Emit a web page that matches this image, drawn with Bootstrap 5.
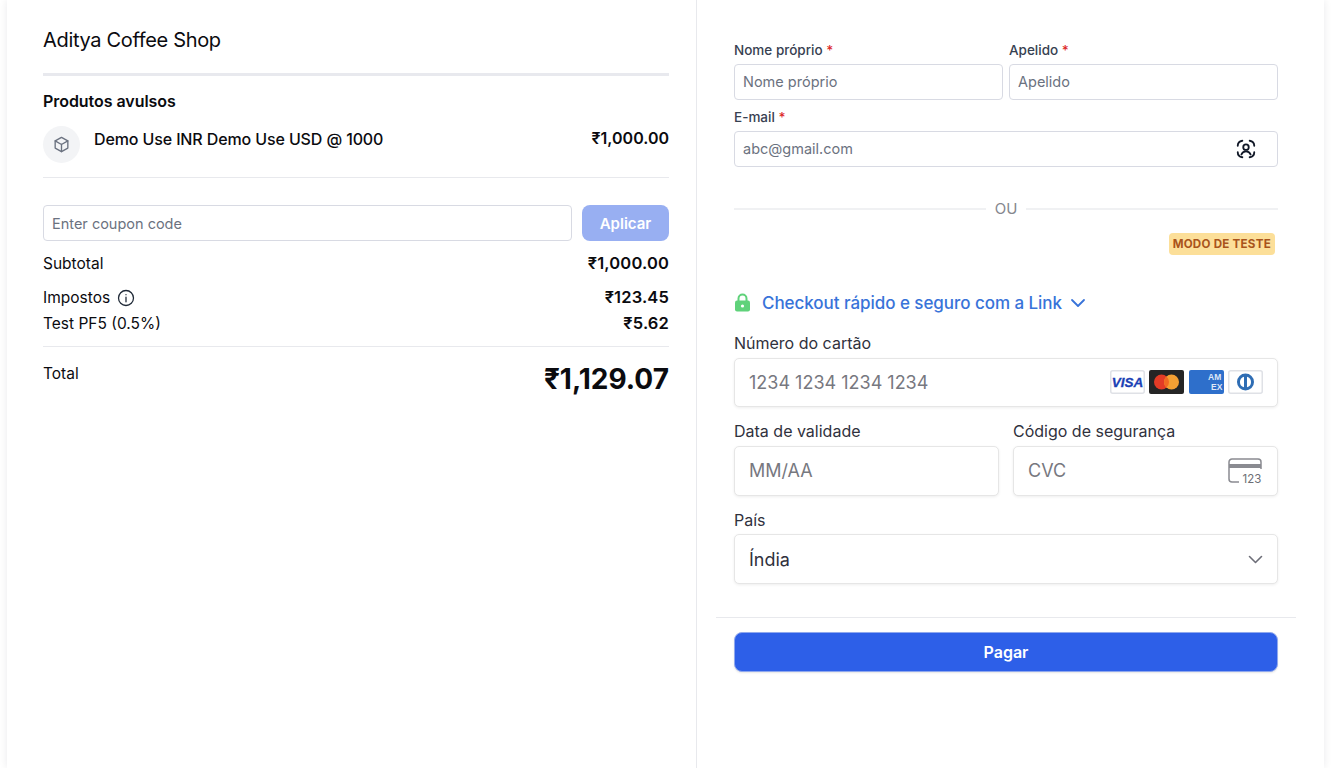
<!DOCTYPE html>
<html lang="pt">
<head>
  <meta charset="utf-8">
  <title>Checkout</title>
  <link rel="stylesheet" href="https://cdn.jsdelivr.net/npm/bootstrap@5.3.0/dist/css/bootstrap.min.css">
  <style>
    html, body { height: 100%; }
    body { font-family: Inter, "Liberation Sans", sans-serif; background: #fff; color: #0b0b0f; overflow: hidden; }
    .shell { width: 1317px; height: 768px; margin-left: 7px; box-shadow: 0 0 8px rgba(17, 24, 39, .09); clip-path: inset(0 -12px 0 -12px); }
    .pane-left { width: 690px; padding: 28px 27px 0 36px; border-right: 1px solid #e8e9ed; }
    .pane-right { width: 627px; padding: 0 28px 0 19px; }
    .half { flex: 1 1 0; min-width: 0; }
    .shop-name { font-size: 20px; line-height: 24px; font-weight: 400; letter-spacing: -.33px; margin: 0; }
    .rule-thick { height: 3px; background: #e8e9ee; margin: 21px 0 15px; }
    .rule { height: 1px; background: #e8e9ed; }
    .group-title { font-size: 16px; line-height: 20px; font-weight: 600; letter-spacing: -.05px; margin: 0 0 15px; }
    .prod-icon { width: 37px; height: 37px; border-radius: 50%; background: #f3f4f6; flex: none; }
    .prod-name { font-size: 16px; line-height: 20px; font-weight: 500; letter-spacing: -.12px; margin: 3px 0 0 14px; }
    .prod-price { font-size: 16px; line-height: 20px; font-weight: 600; margin-top: 2px; }
    .field { height: 36px; border: 1px solid #d8dae3; border-radius: 4px; font-size: 14.5px; color: #374151; padding: 0 8px 2px; box-shadow: none; }
    .field::placeholder { color: #6b7280; opacity: 1; }
    .field-coupon { padding-bottom: 0; }
    .btn-apply { width: 87px; height: 36px; flex: none; font-size: 15px; font-weight: 600; color: #fff; background: #98aff2; border: 0; border-radius: 8px; padding: 2px 0 0; }
    .sum-line { font-size: 15.5px; line-height: 20px; }
    .sum-line > span { line-height: 22px; }
    .sum-line b { font-size: 16.5px; font-weight: 600; letter-spacing: .15px; }
    .total-price { font-size: 28px; line-height: 32px; font-weight: 700; }
    .form-label-sm { font-size: 13.5px; line-height: 16px; font-weight: 500; color: #374151; margin-bottom: 6px; display: block; }
    .req { color: #dc2626; }
    .pad-form { padding: 0 18px; }
    .or-text { font-size: 15px; color: #85878e; line-height: 20px; }
    .or-line { height: 2px; background: #f0f1f3; }
    .test-badge { font-size: 11.6px; line-height: 22px; height: 22px; font-weight: 700; letter-spacing: .25px; color: #a9541b; background: #fcdf99; border-radius: 4px; padding: 0 4px; }
    .link-row { font-size: 17px; line-height: 20px; font-weight: 500; letter-spacing: -.05px; color: #3873d9; }
    .stripe-label { font-size: 16px; line-height: 20px; color: #30313d; margin-bottom: 4.7px; display: block; }
    .stripe-box { height: 49.6px; border: 1px solid #e6e6e6; border-radius: 5px; box-shadow: 0 1px 3px rgba(0, 0, 0, .07); padding: 0 14px; font-size: 18px; color: #77787f; background: #fff; }
    .card-logos { gap: 4.33px; margin-bottom: 1px; }
    .card-logo { width: 35px; height: 24px; display: block; }
    .btn-pay { height: 40px; font-size: 16px; font-weight: 600; color: #fff; background: #2d5fe8; border: 1px solid #8fa8ee; border-radius: 8px; padding: 0; box-shadow: 0 1px 2px rgba(0, 0, 0, .1); }
    .btn-pay:hover { background: #2d5fe8; color: #fff; }
    .pay-rule { height: 1px; background: #e8e9ed; }
  </style>
</head>
<body>
  <div class="shell d-flex">
    <!-- resumo do pedido -->
    <section class="pane-left">
      <h1 class="shop-name">Aditya Coffee Shop</h1>
      <div class="rule-thick"></div>
      <h2 class="group-title">Produtos avulsos</h2>
      <div class="d-flex align-items-start">
        <div class="prod-icon d-flex align-items-center justify-content-center">
          <svg width="19" height="19" viewBox="0 0 24 24" fill="none" stroke="#6b7280" stroke-width="1.7" stroke-linejoin="round" stroke-linecap="round"><path d="M12 3l8 4.500v9L12 21l-8-4.500v-9z"/><path d="M4 7.500l8 4.500 8-4.500M12 12v9"/></svg>
        </div>
        <div class="prod-name">Demo Use INR Demo Use USD @ 1000</div>
        <div class="prod-price ms-auto">₹1,000.00</div>
      </div>
      <div class="rule" style="margin-top:14px"></div>

      <div class="d-flex" style="gap:10px;margin-top:27px">
        <input type="text" class="form-control field field-coupon" placeholder="Enter coupon code">
        <button type="button" class="btn btn-apply">Aplicar</button>
      </div>

      <div class="sum-line d-flex justify-content-between mt-2 pt-1"><span>Subtotal</span><b>₹1,000.00</b></div>
      <div class="sum-line d-flex justify-content-between" style="margin-top:12px">
        <span class="d-flex align-items-center" style="gap:7px">Impostos
          <svg width="18" height="18" viewBox="0 0 24 24" fill="none" stroke="#1f2937" stroke-width="1.700" stroke-linecap="round"><circle cx="12" cy="12" r="10"/><path d="M12 11v6M12 7.400v.1"/></svg>
        </span>
        <b>₹123.45</b>
      </div>
      <div class="sum-line d-flex justify-content-between" style="margin-top:4px"><span>Test PF5 (0.5%)</span><b>₹5.62</b></div>
      <div class="rule" style="margin-top:11px"></div>
      <div class="d-flex justify-content-between align-items-start" style="margin-top:16px">
        <span class="sum-line"><span>Total</span></span>
        <span class="total-price">₹1,129.07</span>
      </div>
    </section>

    <!-- pagamento -->
    <section class="pane-right">
      <div class="pad-form" style="padding-top:42px">
        <div class="d-flex" style="gap:6px">
          <div class="half">
            <label class="form-label-sm">Nome próprio <span class="req">*</span></label>
            <input type="text" class="form-control field" placeholder="Nome próprio">
          </div>
          <div class="half">
            <label class="form-label-sm">Apelido <span class="req">*</span></label>
            <input type="text" class="form-control field" placeholder="Apelido">
          </div>
        </div>
        <label class="form-label-sm" style="margin-top:9px">E-mail <span class="req">*</span></label>
        <div class="position-relative">
          <input type="text" class="form-control field" placeholder="abc@gmail.com">
          <svg class="position-absolute" style="right:21px;top:7px" width="22" height="22" viewBox="0 0 24 24" fill="none" stroke="#111827" stroke-width="2" stroke-linecap="round"><path d="M3 8.500C3 5.500 5 3.500 8 3M16 3c3 .5 5 2.500 5 5.500M3 15.500C3 18.500 5 20.500 8 21M16 21c3-.5 5-2.500 5-5.500"/><circle cx="12" cy="10" r="3"/><path d="M7 18c.8-2.500 2.500-3.500 5-3.500s4.200 1 5 3.500"/></svg>
        </div>

        <div class="d-flex align-items-center" style="gap:9px;margin-top:32px">
          <div class="or-line flex-grow-1"></div>
          <div class="or-text">OU</div>
          <div class="or-line flex-grow-1"></div>
        </div>
        <div class="d-flex justify-content-end" style="margin-top:14px;padding-right:3px">
          <span class="test-badge">MODO DE TESTE</span>
        </div>

        <div class="link-row d-flex align-items-center" style="margin-top:38px">
          <svg width="17" height="20" viewBox="0 0 17 20"><path d="M4.500 8V5.500a4 4 0 0 1 8 0V8" fill="none" stroke="#5fd27a" stroke-width="2"/><rect x="1" y="7.500" width="15" height="11" rx="2" fill="#5fd27a"/><circle cx="8.500" cy="13" r="1.600" fill="#fff"/></svg>
          <span style="margin-left:11px">Checkout rápido e seguro com a Link</span>
          <svg style="margin-left:8px" width="16" height="10" viewBox="0 0 16 10" fill="none" stroke="#3873d9" stroke-width="1.800" stroke-linecap="round" stroke-linejoin="round"><path d="M2 2l6 6 6-6"/></svg>
        </div>

        <label class="stripe-label" style="margin-top:20px">Número do cartão</label>
        <div class="stripe-box d-flex align-items-center">
          <span>1234 1234 1234 1234</span>
          <div class="card-logos ms-auto d-flex">
            <svg class="card-logo" viewBox="0 0 35 24"><rect x=".75" y=".75" width="33.500" height="22.500" rx="2" fill="#fff" stroke="#dfe1e6" stroke-width="1.500"/><text x="17.500" y="16.500" text-anchor="middle" font-family="Liberation Sans, sans-serif" font-size="13.500" font-weight="700" font-style="italic" fill="#1a3fb5" stroke="#1a3fb5" stroke-width=".3">VISA</text></svg>
            <svg class="card-logo" viewBox="0 0 35 24"><rect width="35" height="24" rx="2" fill="#252525"/><circle cx="12.500" cy="12" r="7.500" fill="#e33b26"/><circle cx="22.500" cy="12" r="7.500" fill="#f4a033"/><path d="M17.500 6.400a7.500 7.500 0 0 1 0 11.200a7.500 7.500 0 0 1 0-11.200z" fill="#f26a22"/></svg>
            <svg class="card-logo" viewBox="0 0 35 24"><rect width="35" height="24" rx="2" fill="#2e6fcb"/><text x="19" y="10" font-family="Liberation Sans, sans-serif" font-size="8.500" font-weight="700" fill="#fff" fill-opacity=".85">AM</text><text x="22" y="20" font-family="Liberation Sans, sans-serif" font-size="8.500" font-weight="700" fill="#fff" fill-opacity=".85">EX</text></svg>
            <svg class="card-logo" viewBox="0 0 35 24"><rect x=".75" y=".75" width="33.500" height="22.500" rx="2" fill="#fff" stroke="#dfe1e6" stroke-width="1.500"/><circle cx="17.500" cy="12" r="8.500" fill="#2e6db4"/><path d="M16 6.700a5.500 5.500 0 0 0 0 10.600zM19 6.700a5.500 5.500 0 0 1 0 10.600z" fill="#fff"/></svg>
          </div>
        </div>

        <div class="d-flex" style="gap:14px;margin-top:14px">
          <div class="half">
            <label class="stripe-label">Data de validade</label>
            <div class="stripe-box d-flex align-items-center">MM/AA</div>
          </div>
          <div class="half">
            <label class="stripe-label">Código de segurança</label>
            <div class="stripe-box d-flex align-items-center">
              <span>CVC</span>
              <svg class="ms-auto" width="36" height="26" viewBox="0 0 36 26" fill="none"><path d="M12 24H5a3 3 0 0 1-3-3V4a3 3 0 0 1 3-3h26a3 3 0 0 1 3 3v7" stroke="#8a8b91" stroke-width="1.500"/><rect x="2" y="6" width="32" height="4" fill="#8a8b91"/><text x="25" y="24.500" text-anchor="middle" font-family="Inter, sans-serif" font-size="11.500" fill="#6d6e75">123</text></svg>
            </div>
          </div>
        </div>

        <label class="stripe-label" style="margin-top:14px">País</label>
        <div class="stripe-box d-flex align-items-center" style="color:#30313d">
          <span>Índia</span>
          <svg class="ms-auto" width="15" height="9" viewBox="0 0 15 9" fill="none" stroke="#6d6e78" stroke-width="1.600" stroke-linecap="round" stroke-linejoin="round"><path d="M1.500 1.500l6 6 6-6"/></svg>
        </div>
      </div>

      <div class="pay-rule" style="margin-top:33px"></div>
      <div class="pad-form" style="margin-top:14px">
        <button type="button" class="btn btn-pay w-100">Pagar</button>
      </div>
    </section>
  </div>
</body>
</html>
